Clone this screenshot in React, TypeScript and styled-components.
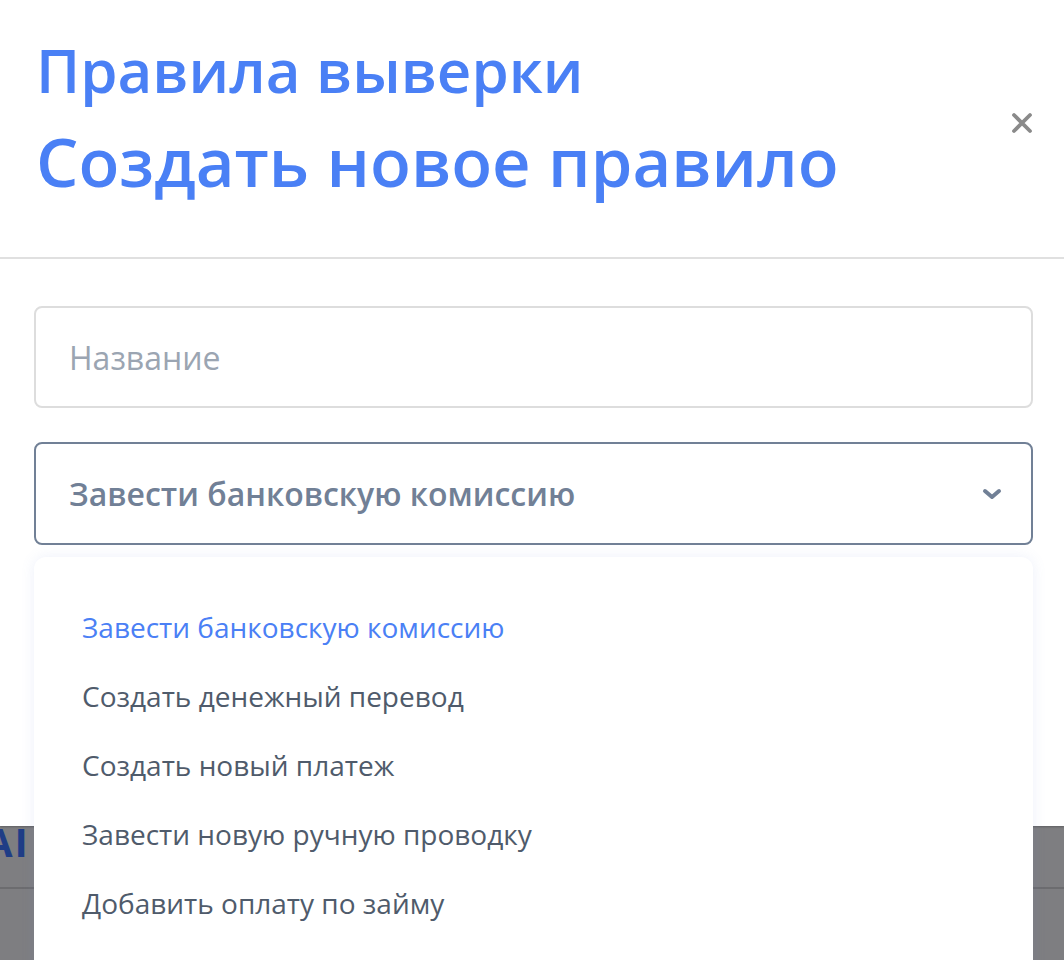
import React, { FC } from 'react'
import styled, { createGlobalStyle } from 'styled-components'

const GlobalStyle = createGlobalStyle`
	html, body {
		margin: 0;
		padding: 0;
		background: #7e7e81;
	}
	* {
		box-sizing: border-box;
	}
`

const Frame = styled.div`
	position: relative;
	width: 100%;
	height: 960px;
	overflow: hidden;
	font-family: 'Open Sans', 'Noto Sans', sans-serif;
`

/* dimmed page behind the dialog */
const Backdrop = styled.div`
	padding-top: 818px;
	background: #7e7e81;
	height: 100%;
`

const BackdropHeader = styled.div`
	height: 71px;
	border-bottom: 2px solid #6c6c6f;
	overflow: hidden;
`

const BackdropTitle = styled.div`
	margin-left: -15px;
	font-size: 40px;
	font-weight: 700;
	line-height: 48px;
	color: #1f3d86;
	letter-spacing: 2px;
`

const Modal = styled.div`
	position: absolute;
	top: 0;
	left: 0;
	right: 0;
	height: 826px;
	background: #fff;
	box-shadow: 0 1px 2px rgba(0, 0, 0, 0.25);
`

const ModalHeader = styled.div`
	display: flex;
	align-items: center;
	justify-content: space-between;
	padding: 24px 30px 51px 36px;
	border-bottom: 2px solid #e0e0e0;
`

const Subtitle = styled.h2`
	margin: 0;
	font-size: 60px;
	font-weight: 600;
	line-height: 92px;
	color: #4a80f5;
`

const Title = styled.h1`
	margin: 0;
	font-size: 67px;
	font-weight: 600;
	line-height: 90px;
	color: #4a80f5;
`

const CloseButton = styled.button`
	display: flex;
	align-items: center;
	justify-content: center;
	width: 24px;
	height: 24px;
	padding: 0;
	margin-top: 16px;
	border: none;
	background: none;
	cursor: pointer;
`

const ModalBody = styled.div`
	position: relative;
	display: flex;
	flex-direction: column;
	gap: 34px;
	padding: 47px 31px 0 34px;
`

const TextInput = styled.input`
	width: 100%;
	height: 102px;
	padding: 0 33px;
	border: 2px solid #dddddd;
	border-radius: 8px;
	font-family: inherit;
	font-size: 32px;
	color: #4a5568;
	outline: none;
	&::placeholder {
		color: #9ba5b2;
	}
`

const SelectBox = styled.div`
	display: flex;
	align-items: center;
	justify-content: space-between;
	height: 103px;
	padding: 0 29px 0 33px;
	border: 2px solid #718096;
	border-radius: 8px;
	font-size: 32px;
	font-weight: 600;
	color: #718096;
	cursor: pointer;
`

const Menu = styled.ul`
	position: absolute;
	top: 298px;
	left: 34px;
	right: 31px;
	margin: 0;
	padding: 36px 0 40px;
	list-style: none;
	background: #fff;
	border-radius: 12px;
	box-shadow: 0 0 14px rgba(110, 130, 210, 0.12);
	height: 480px;
`

const MenuItem = styled.li<{ active?: boolean }>`
	padding: 15px 48px 16px;
	font-size: 28px;
	line-height: 38px;
	color: ${(p) => (p.active ? '#4a80f5' : '#4f5b6b')};
	cursor: pointer;
`

const options = [
	'Завести банковскую комиссию',
	'Создать денежный перевод',
	'Создать новый платеж',
	'Завести новую ручную проводку',
	'Добавить оплату по займу',
]

const App: FC = () => {
	const selected = options[0]

	return (
		<Frame>
			<GlobalStyle />
			<Backdrop>
				<BackdropHeader>
					<BackdropTitle>AI</BackdropTitle>
				</BackdropHeader>
			</Backdrop>
			<Modal>
				<ModalHeader>
					<div>
						<Subtitle>Правила выверки</Subtitle>
						<Title>Создать новое правило</Title>
					</div>
					<CloseButton aria-label="Закрыть">
						<svg width="22" height="22" viewBox="0 0 22 22">
							<path
								d="M3 3 L19 19 M19 3 L3 19"
								stroke="#8a8a8a"
								strokeWidth="3.8"
								strokeLinecap="round"
							/>
						</svg>
					</CloseButton>
				</ModalHeader>
				<ModalBody>
					<TextInput placeholder="Название" />
					<SelectBox>
						<span>{selected}</span>
						<svg width="20" height="12" viewBox="0 0 20 12">
							<path
								d="M3 3 L10 9 L17 3"
								fill="none"
								stroke="#718096"
								strokeWidth="4"
								strokeLinecap="round"
								strokeLinejoin="round"
							/>
						</svg>
					</SelectBox>
					<Menu>
						{options.map((o) => (
							<MenuItem key={o} active={o === selected}>
								{o}
							</MenuItem>
						))}
					</Menu>
				</ModalBody>
			</Modal>
		</Frame>
	)
}

export default App
